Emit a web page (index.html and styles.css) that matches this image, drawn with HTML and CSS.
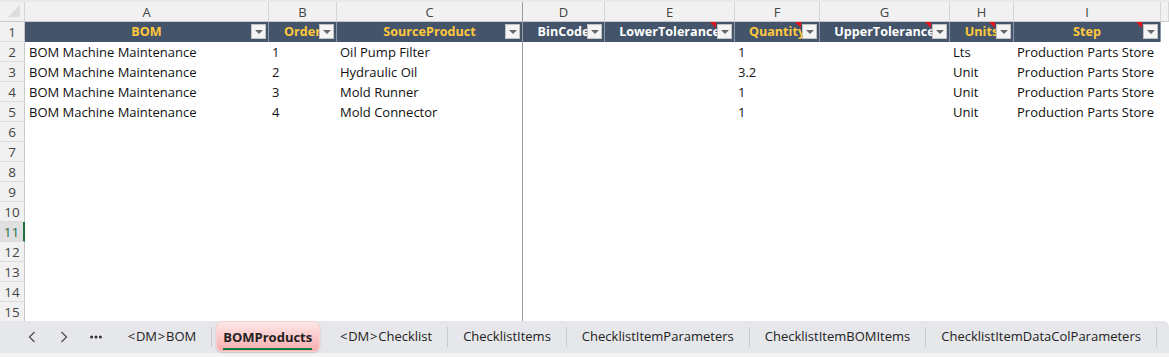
FILE: index.html
```html
<!DOCTYPE html>
<html lang="en">

<head>
    <meta charset="UTF-8">
    <title>BOMProducts</title>
    <link rel="stylesheet" href="styles.css">
</head>

<body>

    <div class="topstrip"></div>

    <div class="sheet">
        <div class="row colheads">
            <div class="corner"><span class="corner-tri"></span></div>
            <div class="ch">A</div>
            <div class="ch">B</div>
            <div class="ch frz">C</div>
            <div class="ch">D</div>
            <div class="ch">E</div>
            <div class="ch">F</div>
            <div class="ch">G</div>
            <div class="ch">H</div>
            <div class="ch">I</div>
            <div class="ch"></div>
        </div>

        <div class="row">
            <div class="rh">1</div>
            <div class="hd gold">BOM<span class="flt"></span></div>
            <div class="hd gold">Order<span class="flt"></span></div>
            <div class="hd gold frz">SourceProduct<span class="flt"></span></div>
            <div class="hd">BinCode<span class="flt"></span></div>
            <div class="hd">LowerTolerance<span class="note"></span><span class="flt"></span></div>
            <div class="hd gold">Quantity<span class="note"></span><span class="flt"></span></div>
            <div class="hd">UpperTolerance<span class="note"></span><span class="flt"></span></div>
            <div class="hd gold">Units<span class="note"></span><span class="flt"></span></div>
            <div class="hd gold">Step<span class="note"></span><span class="flt"></span></div>
            <div class="c"></div>
        </div>

        <div class="row">
            <div class="rh">2</div>
            <div class="c">BOM Machine Maintenance</div>
            <div class="c">1</div>
            <div class="c frz">Oil Pump Filter</div>
            <div class="c"></div>
            <div class="c"></div>
            <div class="c">1</div>
            <div class="c"></div>
            <div class="c">Lts</div>
            <div class="c">Production Parts Store</div>
            <div class="c"></div>
        </div>
        <div class="row">
            <div class="rh">3</div>
            <div class="c">BOM Machine Maintenance</div>
            <div class="c">2</div>
            <div class="c frz">Hydraulic Oil</div>
            <div class="c"></div>
            <div class="c"></div>
            <div class="c">3.2</div>
            <div class="c"></div>
            <div class="c">Unit</div>
            <div class="c">Production Parts Store</div>
            <div class="c"></div>
        </div>
        <div class="row">
            <div class="rh">4</div>
            <div class="c">BOM Machine Maintenance</div>
            <div class="c">3</div>
            <div class="c frz">Mold Runner</div>
            <div class="c"></div>
            <div class="c"></div>
            <div class="c">1</div>
            <div class="c"></div>
            <div class="c">Unit</div>
            <div class="c">Production Parts Store</div>
            <div class="c"></div>
        </div>
        <div class="row">
            <div class="rh">5</div>
            <div class="c">BOM Machine Maintenance</div>
            <div class="c">4</div>
            <div class="c frz">Mold Connector</div>
            <div class="c"></div>
            <div class="c"></div>
            <div class="c">1</div>
            <div class="c"></div>
            <div class="c">Unit</div>
            <div class="c">Production Parts Store</div>
            <div class="c"></div>
        </div>

        <div class="row empty"><div class="rh">6</div><div class="blank"></div><div class="blank"></div><div class="blank frz"></div></div>
        <div class="row empty"><div class="rh">7</div><div class="blank"></div><div class="blank"></div><div class="blank frz"></div></div>
        <div class="row empty"><div class="rh">8</div><div class="blank"></div><div class="blank"></div><div class="blank frz"></div></div>
        <div class="row empty"><div class="rh">9</div><div class="blank"></div><div class="blank"></div><div class="blank frz"></div></div>
        <div class="row empty"><div class="rh">10</div><div class="blank"></div><div class="blank"></div><div class="blank frz"></div></div>
        <div class="row empty"><div class="rh active">11</div><div class="blank"></div><div class="blank"></div><div class="blank frz"></div></div>
        <div class="row empty"><div class="rh">12</div><div class="blank"></div><div class="blank"></div><div class="blank frz"></div></div>
        <div class="row empty"><div class="rh">13</div><div class="blank"></div><div class="blank"></div><div class="blank frz"></div></div>
        <div class="row empty"><div class="rh">14</div><div class="blank"></div><div class="blank"></div><div class="blank frz"></div></div>
        <div class="row empty"><div class="rh">15</div><div class="blank"></div><div class="blank"></div><div class="blank frz"></div></div>
    </div>

    <div class="tabbar">
        <span class="nav">
            <svg width="8" height="12" viewBox="0 0 8 12"><path d="M6.5 1 L1.5 6 L6.5 11" fill="none" stroke="#4a4a4a" stroke-width="1.2"/></svg>
        </span>
        <span class="nav">
            <svg width="8" height="12" viewBox="0 0 8 12"><path d="M1.5 1 L6.5 6 L1.5 11" fill="none" stroke="#4a4a4a" stroke-width="1.2"/></svg>
        </span>
        <span class="nav">
            <svg width="12" height="4" viewBox="0 0 12 4"><circle cx="1.6" cy="2" r="1.5" fill="#333"/><circle cx="6" cy="2" r="1.5" fill="#333"/><circle cx="10.4" cy="2" r="1.5" fill="#333"/></svg>
        </span>
        <span class="tab first"><span class="br">&lt;</span>DM<span class="br">&gt;</span>BOM</span>
        <span class="sep"></span>
        <span class="tab current"><span class="tab-label">BOMProducts</span></span>
        <span class="tab"><span class="br">&lt;</span>DM<span class="br">&gt;</span>Checklist</span>
        <span class="sep"></span>
        <span class="tab">ChecklistItems</span>
        <span class="sep"></span>
        <span class="tab">ChecklistItemParameters</span>
        <span class="sep"></span>
        <span class="tab">ChecklistItemBOMItems</span>
        <span class="sep"></span>
        <span class="tab">ChecklistItemDataColParameters</span>
        <span class="sep"></span>
    </div>
    <div class="bottomstrip"></div>

</body>

</html>
```

FILE: styles.css
```css
body {
    margin: 0;
    padding: 0;
    width: 1169px;
    height: 357px;
    overflow: hidden;
    background: #ffffff;
    font-family: 'Open Sans', 'Noto Sans', sans-serif;
    font-size: 13px;
    color: #111111;
}

.topstrip {
    height: 2px;
    background: #e9e9e9;
}

.sheet {
    height: 319px;
    overflow: hidden;
}

.row {
    display: grid;
    grid-template-columns: 25px 244px 68px 186px 82px 130px 85px 130px 64px 147px 8px;
    height: 20px;
}

.row > div {
    box-sizing: border-box;
    height: 20px;
    line-height: 20px;
    white-space: nowrap;
    overflow: hidden;
    position: relative;
}

/* column letters */
.colheads > div {
    background: #f1f1f1;
    border-right: 1px solid #d6d6d6;
    border-bottom: 1px solid #c8c8c8;
    text-align: center;
    color: #444444;
    font-size: 13px;
}

.corner {
    background: #f1f1f1;
}

.corner-tri {
    position: absolute;
    right: 4px;
    bottom: 4px;
    width: 0;
    height: 0;
    border-left: 12px solid transparent;
    border-bottom: 12px solid #dcdcdc;
}

/* row numbers */
.rh {
    background: #f1f1f1;
    border-right: 1px solid #c8c8c8;
    border-bottom: 1px solid #dcdcdc;
    text-align: center;
    color: #444444;
    font-size: 13.5px;
}

.rh.active {
    background: #dfdfdf;
    color: #1e7145;
    border-right: 2px solid #1e7145;
}

/* table header */
.hd {
    background: #44546a;
    color: #ffffff;
    font-weight: bold;
    font-size: 12.6px;
    text-align: center;
    border-right: 1px solid #8a97a8;
}

.hd.gold {
    color: #ffc83d;
}

.flt {
    position: absolute;
    right: 2px;
    top: 2px;
    width: 15px;
    height: 15px;
    box-sizing: border-box;
    background: #f4f4f4;
    border: 1px solid #c2c2c2;
}

.flt::after {
    content: "";
    position: absolute;
    left: 3px;
    top: 5px;
    border-left: 4px solid transparent;
    border-right: 4px solid transparent;
    border-top: 4px solid #666666;
}

.note {
    position: absolute;
    right: 18px;
    top: 0;
    width: 0;
    height: 0;
    border-left: 6px solid transparent;
    border-top: 6px solid #e8141b;
}

/* data cells */
.c {
    padding-left: 3px;
}

.c:nth-child(2) {
    padding-left: 4px;
}

.frz {
    border-right: 1px solid #9b9b9b !important;
}

/* sheet tabs */
.tabbar {
    height: 32px;
    background: #e6e7ea;
    border-top-right-radius: 6px;
    display: flex;
    align-items: center;
    font-size: 13px;
    color: #222222;
}

.nav {
    width: 32px;
    height: 32px;
    display: flex;
    align-items: center;
    justify-content: center;
}

.nav:first-child {
    margin-left: 16px;
}

.tab {
    padding: 0 15px;
    height: 32px;
    line-height: 31px;
}

.tab.first {
    padding-left: 15px;
}

.br {
    margin: 0 0.75px;
}

.sep {
    width: 1px;
    height: 20px;
    background: #c9cacd;
}

.tab.current {
    background: linear-gradient(#fde8e8, #f8adad);
    border: 1px solid #f6d2d2;
    border-radius: 6px;
    margin: 0 4px;
    padding: 0 7px 0 6px;
    height: 31px;
    box-sizing: border-box;
    align-self: flex-start;
    font-weight: bold;
    box-shadow: 0 1px 2px rgba(0, 0, 0, 0.15);
}

.tab-label {
    display: inline-block;
    line-height: 22px;
    border-bottom: 2px solid #107c41;
}

.bottomstrip {
    height: 4px;
    background: #f4f4f4;
}
```
